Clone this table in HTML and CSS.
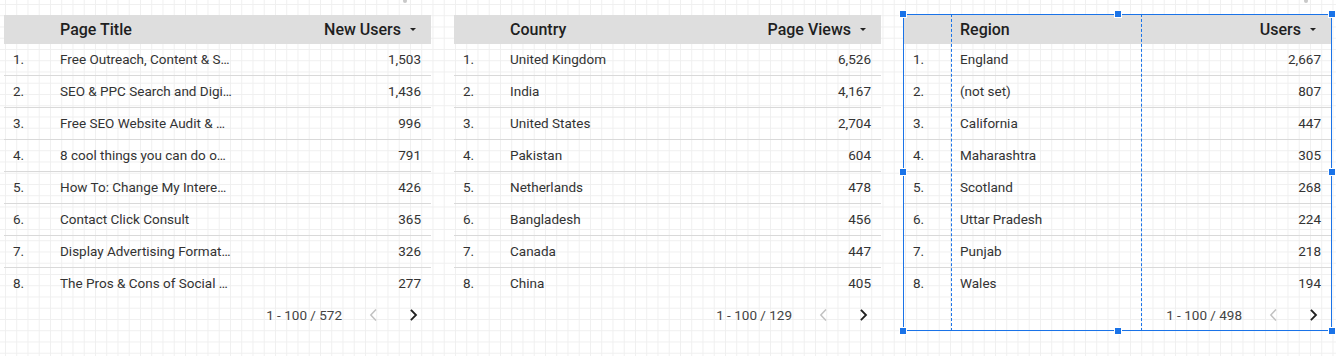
FILE: index.html
```html
<!DOCTYPE html>
<html lang="en">
<head>
<meta charset="utf-8">
<title>Tables</title>
<link rel="stylesheet" href="styles.css">
</head>
<body>
<div class="canvas">
  <span class="dot dot-a"></span>
  <span class="dot dot-b"></span>
  <div class="board">
    <section class="tbl">
      <div class="row head"><div class="c idx"></div><div class="c dim">Page Title</div><div class="c met">New Users<span class="sort"></span></div></div>
      <div class="row"><div class="c idx">1.</div><div class="c dim">Free Outreach, Content &amp; S…</div><div class="c met">1,503</div></div>
      <div class="row"><div class="c idx">2.</div><div class="c dim">SEO &amp; PPC Search and Digi…</div><div class="c met">1,436</div></div>
      <div class="row"><div class="c idx">3.</div><div class="c dim">Free SEO Website Audit &amp; …</div><div class="c met">996</div></div>
      <div class="row"><div class="c idx">4.</div><div class="c dim">8 cool things you can do o…</div><div class="c met">791</div></div>
      <div class="row"><div class="c idx">5.</div><div class="c dim">How To: Change My Intere…</div><div class="c met">426</div></div>
      <div class="row"><div class="c idx">6.</div><div class="c dim">Contact Click Consult</div><div class="c met">365</div></div>
      <div class="row"><div class="c idx">7.</div><div class="c dim">Display Advertising Format…</div><div class="c met">326</div></div>
      <div class="row"><div class="c idx">8.</div><div class="c dim">The Pros &amp; Cons of Social …</div><div class="c met">277</div></div>
      <div class="pager"><span class="range">1 - 100 / 572</span>
        <svg class="chev prev" width="8" height="12" viewBox="0 0 8 12"><path d="M6.5 1 L1.8 6 L6.5 11"/></svg>
        <svg class="chev next" width="8" height="12" viewBox="0 0 8 12"><path d="M1.5 1.5 L6 6 L1.5 10.5"/></svg>
      </div>
    </section>

    <section class="tbl">
      <div class="row head"><div class="c idx"></div><div class="c dim">Country</div><div class="c met">Page Views<span class="sort"></span></div></div>
      <div class="row"><div class="c idx">1.</div><div class="c dim">United Kingdom</div><div class="c met">6,526</div></div>
      <div class="row"><div class="c idx">2.</div><div class="c dim">India</div><div class="c met">4,167</div></div>
      <div class="row"><div class="c idx">3.</div><div class="c dim">United States</div><div class="c met">2,704</div></div>
      <div class="row"><div class="c idx">4.</div><div class="c dim">Pakistan</div><div class="c met">604</div></div>
      <div class="row"><div class="c idx">5.</div><div class="c dim">Netherlands</div><div class="c met">478</div></div>
      <div class="row"><div class="c idx">6.</div><div class="c dim">Bangladesh</div><div class="c met">456</div></div>
      <div class="row"><div class="c idx">7.</div><div class="c dim">Canada</div><div class="c met">447</div></div>
      <div class="row"><div class="c idx">8.</div><div class="c dim">China</div><div class="c met">405</div></div>
      <div class="pager"><span class="range">1 - 100 / 129</span>
        <svg class="chev prev" width="8" height="12" viewBox="0 0 8 12"><path d="M6.5 1 L1.8 6 L6.5 11"/></svg>
        <svg class="chev next" width="8" height="12" viewBox="0 0 8 12"><path d="M1.5 1.5 L6 6 L1.5 10.5"/></svg>
      </div>
    </section>

    <section class="tbl selected">
      <div class="row head"><div class="c idx"></div><div class="c dim">Region</div><div class="c met">Users<span class="sort"></span></div></div>
      <div class="row"><div class="c idx">1.</div><div class="c dim">England</div><div class="c met">2,667</div></div>
      <div class="row"><div class="c idx">2.</div><div class="c dim">(not set)</div><div class="c met">807</div></div>
      <div class="row"><div class="c idx">3.</div><div class="c dim">California</div><div class="c met">447</div></div>
      <div class="row"><div class="c idx">4.</div><div class="c dim">Maharashtra</div><div class="c met">305</div></div>
      <div class="row"><div class="c idx">5.</div><div class="c dim">Scotland</div><div class="c met">268</div></div>
      <div class="row"><div class="c idx">6.</div><div class="c dim">Uttar Pradesh</div><div class="c met">224</div></div>
      <div class="row"><div class="c idx">7.</div><div class="c dim">Punjab</div><div class="c met">218</div></div>
      <div class="row"><div class="c idx">8.</div><div class="c dim">Wales</div><div class="c met">194</div></div>
      <div class="pager"><span class="range">1 - 100 / 498</span>
        <svg class="chev prev" width="8" height="12" viewBox="0 0 8 12"><path d="M6.5 1 L1.8 6 L6.5 11"/></svg>
        <svg class="chev next" width="8" height="12" viewBox="0 0 8 12"><path d="M1.5 1.5 L6 6 L1.5 10.5"/></svg>
      </div>
      <span class="divider d1"></span>
      <span class="divider d2"></span>
      <span class="handle h-tl"></span>
      <span class="handle h-tm"></span>
      <span class="handle h-tr"></span>
      <span class="handle h-ml"></span>
      <span class="handle h-mr"></span>
      <span class="handle h-bl"></span>
      <span class="handle h-bm"></span>
      <span class="handle h-br"></span>
    </section>
  </div>
</div>
</body>
</html>
```

FILE: styles.css
```css
* { box-sizing: border-box; }

html, body {
  margin: 0;
  padding: 0;
}

body {
  width: 1336px;
  height: 356px;
  overflow: hidden;
  font-family: Roboto, "Liberation Sans", Arial, sans-serif;
  color: #333;
  background-color: #fff;
  background-image:
    linear-gradient(to right, #efefef 1px, transparent 1px),
    linear-gradient(to bottom, #efefef 1px, transparent 1px);
  background-size: 11.25px 11.25px;
  background-position: 5px 4px;
}

.canvas {
  position: relative;
  width: 1336px;
  height: 356px;
}

.dot {
  position: absolute;
  width: 4px;
  height: 4px;
  border-radius: 50%;
  background: #c9c9c9;
  top: -1px;
}
.dot-a { left: 403px; }
.dot-b { left: 1304px; }

.board {
  display: flex;
  gap: 21px;
  padding: 14px 0 0 3px;
}

.tbl {
  position: relative;
  width: 429px;
  height: 317px;
  border: 1px solid transparent;
  display: flex;
  flex-direction: column;
}

.tbl.selected {
  border-color: #1a73e8;
}

.row {
  display: flex;
  height: 32px;
  border-bottom: 1px solid #d9d9d9;
  font-size: 13.5px;
  line-height: 31px;
  color: #333;
}

.row:nth-child(9) {
  height: 31px;
  border-bottom: none;
}

.row.head {
  height: 29px;
  line-height: 29px;
  background: #dedede;
  border-bottom: none;
  font-size: 16px;
  font-weight: 500;
  color: #1f1f1f;
}

.c {
  white-space: nowrap;
  overflow: hidden;
}

.idx {
  width: 47px;
  padding-left: 9px;
}

.dim {
  width: 190px;
  padding-left: 9px;
}

.met {
  width: 190px;
  padding-right: 10px;
  text-align: right;
}

.head .met {
  display: flex;
  justify-content: flex-end;
  align-items: center;
  gap: 4px;
  padding-right: 10px;
}

.sort {
  width: 16px;
  height: 29px;
  display: flex;
  align-items: center;
  justify-content: center;
}

.sort::before {
  content: "";
  width: 0;
  height: 0;
  border-left: 3px solid transparent;
  border-right: 3px solid transparent;
  border-top: 3px solid #222;
}

.pager {
  height: 31px;
  display: flex;
  align-items: center;
  justify-content: flex-end;
  padding-right: 13px;
  font-size: 13.5px;
  color: #444;
}

.range {
  margin-right: 27px;
}

.chev path {
  fill: none;
  stroke-width: 1.8;
  stroke-linecap: square;
}

.chev.prev {
  margin-right: 33px;
}
.chev.prev path {
  stroke: #c2c2c2;
  stroke-width: 1.5;
}
.chev.next path {
  stroke: #1f1f1f;
}

.divider {
  position: absolute;
  top: -1px;
  bottom: -1px;
  width: 0;
  border-left: 1px dashed #1a73e8;
}
.d1 { left: 47px; }
.d2 { left: 237px; }

.handle {
  position: absolute;
  width: 8px;
  height: 8px;
  background: #1a73e8;
  border: 1px solid #fff;
}
.h-tl { left: -5px; top: -5px; }
.h-tm { left: 210px; top: -5px; }
.h-tr { right: -5px; top: -5px; }
.h-ml { left: -5px; top: 153px; }
.h-mr { right: -5px; top: 153px; }
.h-bl { left: -5px; bottom: -5px; }
.h-bm { left: 210px; bottom: -5px; }
.h-br { right: -5px; bottom: -5px; }
```
